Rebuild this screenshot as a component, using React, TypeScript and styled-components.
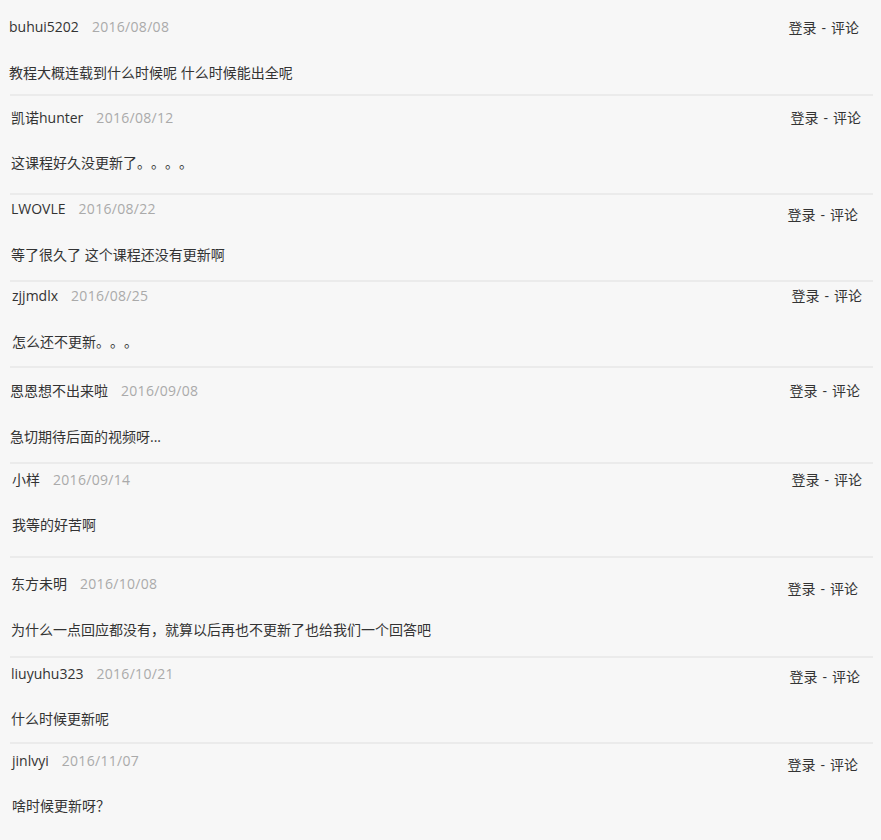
import styled, { createGlobalStyle } from 'styled-components';

const GlobalStyle = createGlobalStyle`
  html, body {
    margin: 0;
    padding: 0;
    background: #f7f7f7;
  }
  body {
    font-family: "Segoe UI", "Open Sans", "Noto Sans CJK SC", sans-serif;
    color: #333;
    text-spacing-trim: space-all;
  }
`;

type Comment = {
  user: string;
  date: string;
  text: string;
  pt: number; // space above the header
  gap: number; // header -> comment text
  pb: number; // comment text -> divider
  indent: number; // nudge of name / text from the list edge
  right: number; // distance of the actions from the divider end
  shift: number; // actions sit a bit lower in some rows
};

const comments: Comment[] = [
  { user: 'buhui5202', date: '2016/08/08', text: '教程大概连载到什么时候呢 什么时候能出全呢', pt: 17, gap: 26, pb: 11, indent: -1, right: 14, shift: 1 },
  { user: '凯诺hunter', date: '2016/08/12', text: '这课程好久没更新了。。。。', pt: 12, gap: 25, pb: 20, indent: 1, right: 12, shift: 0 },
  { user: 'LWOVLE', date: '2016/08/22', text: '等了很久了 这个课程还没有更新啊', pt: 4, gap: 26, pb: 15, indent: 1, right: 15, shift: 6 },
  { user: 'zjjmdlx', date: '2016/08/25', text: '怎么还不更新。。。', pt: 4, gap: 26, pb: 14, indent: 2, right: 11, shift: 0 },
  { user: '恩恩想不出来啦', date: '2016/09/08', text: '急切期待后面的视频呀...', pt: 13, gap: 26, pb: 15, indent: 0, right: 13, shift: 0 },
  { user: '小样', date: '2016/09/14', text: '我等的好苦啊', pt: 6, gap: 25, pb: 21, indent: 2, right: 11, shift: 0 },
  { user: '东方未明', date: '2016/10/08', text: '为什么一点回应都没有，就算以后再也不更新了也给我们一个回答吧', pt: 16, gap: 26, pb: 16, indent: 1, right: 15, shift: 5 },
  { user: 'liuyuhu323', date: '2016/10/21', text: '什么时候更新呢', pt: 6, gap: 25, pb: 13, indent: 1, right: 13, shift: 3 },
  { user: 'jinlvyi', date: '2016/11/07', text: '啥时候更新呀？', pt: 7, gap: 25, pb: 24, indent: 2, right: 15, shift: 4 },
];

const List = styled.div`
  width: 863px;
  padding-left: 10px;
`;

const Item = styled.div<{ $pt: number; $pb: number; $last?: boolean }>`
  padding-top: ${(p) => p.$pt}px;
  padding-bottom: ${(p) => p.$pb}px;
  border-bottom: ${(p) => (p.$last ? 'none' : '2px solid #ebebeb')};
`;

const Header = styled.div<{ $indent: number; $right: number }>`
  display: flex;
  align-items: flex-start;
  justify-content: space-between;
  height: 20px;
  margin-left: ${(p) => p.$indent}px;
  margin-right: ${(p) => p.$right}px;
`;

const Author = styled.div`
  display: flex;
  align-items: center;
  font-size: 14px;
  line-height: 20px;
`;

const UserName = styled.span`
  color: #333;
`;

const DateText = styled.span`
  color: #aaa;
  margin-left: 13px;
  letter-spacing: 0.3px;
`;

const Actions = styled.div<{ $shift: number }>`
  font-size: 14px;
  line-height: 20px;
  color: #333;
  margin-top: ${(p) => p.$shift}px;
`;

const Sep = styled.span`
  margin: 0 5px;
`;

const Body = styled.p<{ $gap: number; $indent: number }>`
  margin: ${(p) => p.$gap}px 0 0 ${(p) => p.$indent}px;
  font-size: 14px;
  line-height: 20px;
  color: #333;
`;

export default function App() {
  return (
    <>
      <GlobalStyle />
      <List>
        {comments.map((c, i) => (
          <Item key={c.user} $pt={c.pt} $pb={c.pb} $last={i === comments.length - 1}>
            <Header $indent={c.indent} $right={c.right}>
              <Author>
                <UserName>{c.user}</UserName>
                <DateText>{c.date}</DateText>
              </Author>
              <Actions $shift={c.shift}>
                登录<Sep>-</Sep>评论
              </Actions>
            </Header>
            <Body $gap={c.gap} $indent={c.indent}>
              {c.text}
            </Body>
          </Item>
        ))}
      </List>
    </>
  );
}
